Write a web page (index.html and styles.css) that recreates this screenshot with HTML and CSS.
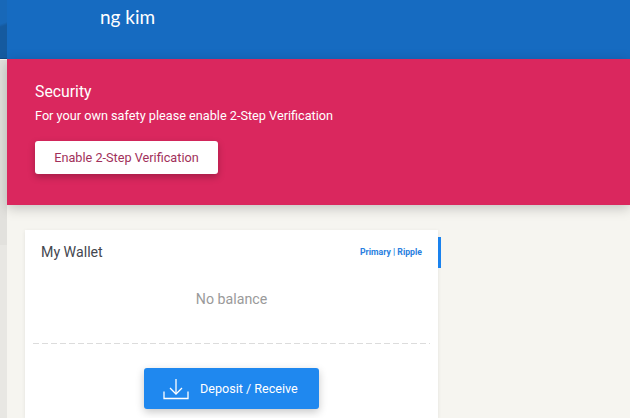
FILE: index.html
```html
<!DOCTYPE html>
<html lang="en">
<head>
<meta charset="utf-8">
<title>Wallet</title>
<link rel="stylesheet" href="styles.css">
</head>
<body>
<div class="app">
  <aside class="rail">
    <div class="rail-top"></div>
    <div class="rail-mid"></div>
  </aside>
  <main class="main">
    <header class="topbar"><span class="user">ng kim</span></header>
    <section class="alert">
      <h2 class="alert-title">Security</h2>
      <p class="alert-text">For your own safety please enable 2-Step Verification</p>
      <button class="alert-btn">Enable 2-Step Verification</button>
    </section>
    <section class="content">
      <div class="card">
        <div class="card-head">
          <span class="card-title">My Wallet</span>
          <span class="card-meta">Primary | Ripple</span>
        </div>
        <div class="balance">No balance</div>
        <div class="actions">
          <button class="deposit">
            <svg class="deposit-icon" width="26" height="22" viewBox="0 0 26 22" fill="none" stroke="#fff" stroke-width="1.3">
              <path d="M1 13.5V20.5H25V13.5"/>
              <path d="M13 1V15.5"/>
              <path d="M7 10L13 16L19 10"/>
            </svg>
            <span>Deposit / Receive</span>
          </button>
        </div>
      </div>
    </section>
  </main>
</div>
</body>
</html>
```

FILE: styles.css
```css
* { box-sizing: border-box; }
html, body { margin: 0; height: 100%; overflow: hidden; }
body { background: #f6f5f0; font-family: Roboto, sans-serif; }
.app { display: flex; height: 418px; overflow: hidden; }
.rail { width: 7px; flex: none; background: #e8e7e3; display: flex; flex-direction: column; }
.rail-top { height: 59px; flex: none; background: linear-gradient(160deg, #1868b8 0 40%, #155a9f 45%); border-bottom: 1px solid #0f4a85; }
.rail-mid { height: 186px; flex: none; background: #e2e1dd; border-top: 1px solid #f6f5f0; }
.main { flex: 1; min-width: 0; display: flex; flex-direction: column; }
.topbar { height: 59px; flex: none; background: #166bc1; color: #fff; padding: 5px 0 0 93px; }
.user { font: 19px/24px Lato, sans-serif; }
.alert { height: 146px; flex: none; background: #da275e; color: #fff; padding: 23px 0 0 28px; box-shadow: 0 3px 12px rgba(0,0,0,.22); position: relative; }
.alert-title { margin: 0; font-size: 15.8px; font-weight: 400; line-height: 20px; }
.alert-text { margin: 6px 0 0; font-size: 12.7px; line-height: 16px; }
.alert-btn { display: block; margin-top: 17px; width: 183px; height: 33px; padding: 0; border: 0; border-radius: 3px; background: #fff; color: #a1305a; font: 12.7px Roboto, sans-serif; box-shadow: 0 3px 7px rgba(0,0,0,.25); }
.content { flex: 1; min-height: 0; padding: 25px 0 0 18px; }
.card { width: 413px; height: 188px; background: #fff; box-shadow: 0 1px 4px rgba(0,0,0,.08); position: relative; }
.card::after { content: ""; position: absolute; right: -3px; top: 7px; width: 3px; height: 31px; background: #1a82ee; }
.card-head { display: flex; justify-content: space-between; align-items: center; padding: 10px 16px 0; height: 34px; }
.card-title { font-size: 14.2px; color: #44474f; }
.card-meta { font-size: 8.7px; font-weight: 700; color: #2a7fe0; }
.balance { margin-top: 25px; text-align: center; font-size: 14.2px; line-height: 20px; color: #9a9a9a; }
.actions { margin: 34px 8px 0; padding-top: 25px; display: flex; justify-content: center; background: repeating-linear-gradient(90deg, #dcdcdc 0 6px, transparent 6px 9px) top / 100% 1px no-repeat; }
.deposit { width: 175px; height: 41px; display: flex; align-items: center; gap: 11px; padding: 0 0 0 19px; border: 0; border-radius: 3px; background: #1f88ef; color: #fff; font: 12.6px Roboto, sans-serif; box-shadow: 0 3px 8px rgba(0,0,0,.22); }
.deposit-icon { flex: none; }
```
